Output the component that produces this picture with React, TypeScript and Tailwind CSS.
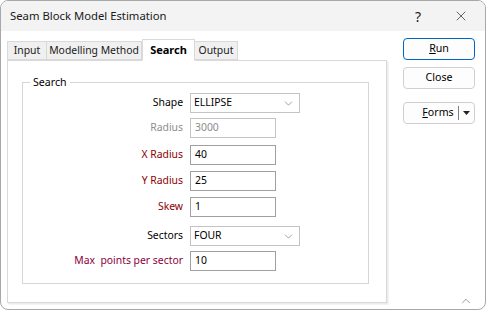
import { ChevronDown, ChevronUp, X } from "lucide-react";
import { ReactNode } from "react";

const font = { fontFamily: '"Segoe UI", "Noto Sans", Arial, sans-serif' };

const Tab = ({ label, active, w }: { label: string; active?: boolean; w: string }) => {
  if (active) {
    return (
      <div
        className={`${w} h-[22px] -mb-px z-10 border border-[#d9d9d9] border-b-white bg-white flex items-center justify-center font-bold text-[11px] text-black whitespace-nowrap`}
      >
        {label}
      </div>
    );
  }
  return (
    <div
      className={`${w} h-[19px] border border-[#d9d9d9] -ml-px first:ml-0 bg-[#f0f0f0] flex items-center justify-center text-[10.4px] text-[#1a1a1a] whitespace-nowrap`}
    >
      {label}
    </div>
  );
};

const Row = ({
  label,
  color,
  mt,
  children,
}: {
  label: string;
  color: string;
  mt: string;
  children: ReactNode;
}) => {
  return (
    <div className={`flex flex-row items-center ${mt}`}>
      <span className={`w-[161px] pr-[1px] text-right text-[10.4px] whitespace-pre ${color}`}>{label}</span>
      <div className="ml-[6px]">{children}</div>
    </div>
  );
};

const Input = ({ value, disabled }: { value: string; disabled?: boolean }) => (
  <div
    className={`w-[86px] h-[20px] border bg-white px-[4px] flex items-center text-[10.4px] ${
      disabled ? "text-[#8d8d8d] border-[#c4c4c4]" : "text-black border-[#a0a0a0]"
    }`}
  >
    {value}
  </div>
);

const Combo = ({ value }: { value: string }) => (
  <div className="w-[110px] h-[20px] border border-[#c4c4c4] bg-white pl-[3px] pr-[4px] flex flex-row items-center justify-between text-[10.4px] text-black">
    <span>{value}</span>
    <ChevronDown size={13} strokeWidth={1} className="text-[#555]" />
  </div>
);

const Button = ({ children, primary }: { children: ReactNode; primary?: boolean }) => (
  <div
    className={`w-[72px] h-[22px] rounded-[4px] border flex items-center justify-center text-[10.6px] text-black bg-[#fdfdfd] ${
      primary ? "border-[#0067c0]" : "border-[#d0d0d0]"
    }`}
  >
    {children}
  </div>
);

export default function App() {
  return (
    <div className="w-[486px] h-[310px] bg-white" style={font}>
      <div className="w-full h-full border border-[#a8a8a8] rounded-[8px] overflow-hidden flex flex-col bg-white">
        <div className="h-[30px] bg-[#f3f3f3] flex flex-row items-center justify-between pl-[9px] pr-[16px] shrink-0">
          <span className="text-[11.3px] text-[#1a1a1a]">Seam Block Model Estimation</span>
          <div className="flex flex-row items-center gap-[32px]">
            <span className="text-[14px] text-[#1a1a1a]">?</span>
            <X size={16} strokeWidth={1} className="text-[#1a1a1a]" />
          </div>
        </div>
        <div className="flex flex-row flex-1">
          <div className="flex flex-col pl-[6px] pt-[7px]">
            <div className="flex flex-row items-end h-[22px]">
              <Tab label="Input" w="w-[40px]" />
              <Tab label="Modelling Method" w="w-[96px]" />
              <Tab label="Search" w="w-[53px]" active />
              <Tab label="Output" w="w-[44px]" />
            </div>
            <div className="w-[380px] h-[243px] border border-[#d9d9d9] shadow-[1px_1px_0_#ececec,2px_2px_0_#f4f4f4] bg-white pl-[14px] pt-[21px]">
              <div className="relative w-[347px] h-[202px] border border-[#d6d6d6] flex flex-col">
                <span className="absolute -top-[9px] left-[7px] px-[3px] bg-white text-[10.6px] leading-[16px] text-black">
                  Search
                </span>
                <Row label="Shape" color="text-black" mt="mt-[10px]">
                  <Combo value="ELLIPSE" />
                </Row>
                <Row label="Radius" color="text-[#8d8d8d]" mt="mt-[5px]">
                  <Input value="3000" disabled />
                </Row>
                <Row label="X Radius" color="text-[#8b0000]" mt="mt-[7px]">
                  <Input value="40" />
                </Row>
                <Row label="Y Radius" color="text-[#8b0000]" mt="mt-[6px]">
                  <Input value="25" />
                </Row>
                <Row label="Skew" color="text-[#8b0000]" mt="mt-[6px]">
                  <Input value="1" />
                </Row>
                <Row label="Sectors" color="text-black" mt="mt-[9px]">
                  <Combo value="FOUR" />
                </Row>
                <Row label="Max  points per sector" color="text-[#8b0040]" mt="mt-[5px]">
                  <Input value="10" />
                </Row>
              </div>
            </div>
          </div>
          <div className="flex flex-col ml-[16px] pt-[7px]">
            <Button primary>
              <span><u>R</u>un</span>
            </Button>
            <div className="mt-[7px]">
              <Button>Close</Button>
            </div>
            <div className="mt-[13px]">
              <div className="w-[72px] h-[22px] rounded-[4px] border border-[#d0d0d0] bg-[#fdfdfd] flex flex-row items-center text-[10.6px] text-black">
                <span className="flex-1 text-center pl-[14px]">
                  <u>F</u>orms
                </span>
                <span className="w-px h-[14px] bg-[#808080]" />
                <svg width="15" height="8" viewBox="0 0 15 8" className="shrink-0">
                  <path d="M4 2 L11 2 L7.5 6 Z" fill="#222" />
                </svg>
              </div>
            </div>
            <div className="flex-1" />
            <div className="flex flex-row justify-end pr-[2px] pb-[1px]">
              <ChevronUp size={14} strokeWidth={1} className="text-[#555]" />
            </div>
          </div>
        </div>
      </div>
    </div>
  );
}
